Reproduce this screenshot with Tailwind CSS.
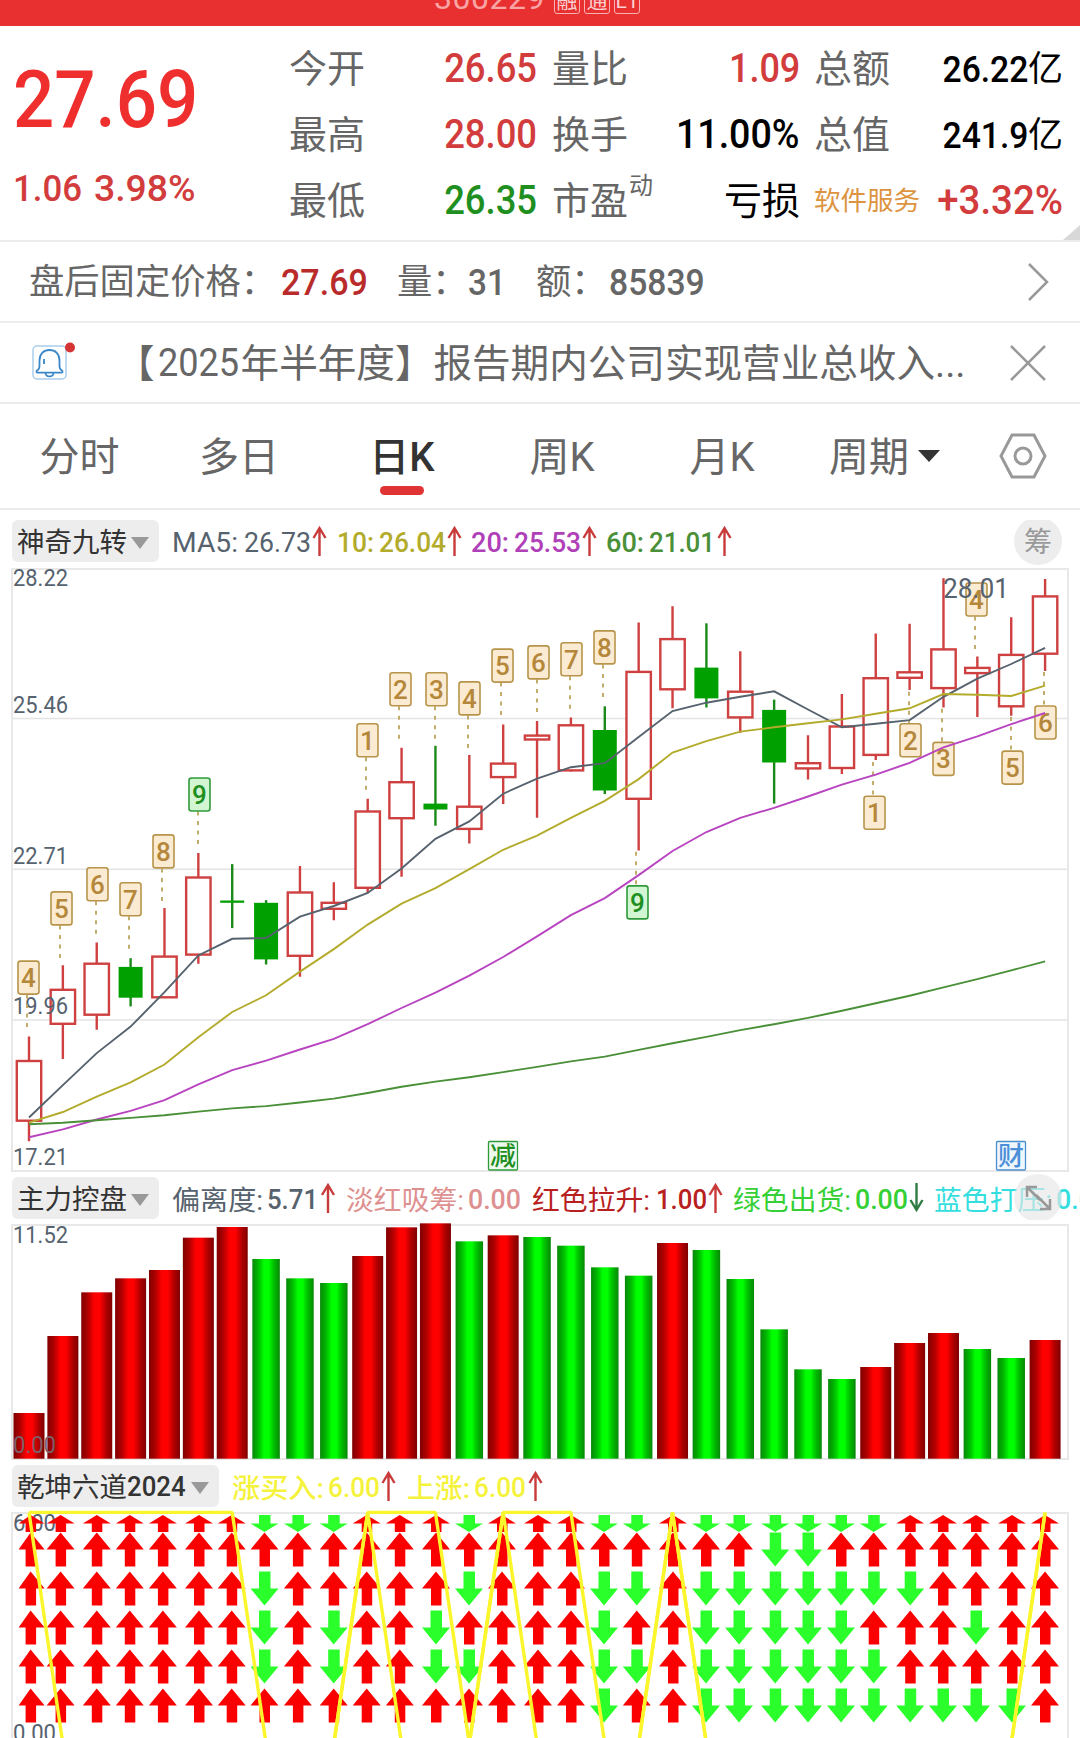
<!DOCTYPE html>
<html lang="zh-CN">
<head>
  <meta charset="UTF-8">
  <title>300229 日K</title>
  <script src="https://cdn.jsdelivr.net/npm/@tailwindcss/browser@4"></script>
</head>
<body class="bg-white w-[1080px] h-[1738px] overflow-hidden leading-none text-[#666] font-[Roboto,'Noto_Sans_CJK_SC',sans-serif]">

  <!-- title bar -->
  <header class="h-[26px] bg-[#e83030] overflow-hidden">
    <div class="flex pl-[434px] -mt-[19px] h-[32px] items-end">
      <span class="w-[120px] text-[32px] leading-[30px] text-[#f9a5a5] tracking-[0.5px]">300229</span>
      <div class="flex gap-[4px] text-[21px] text-[#fbd0d0] -mb-px">
        <span class="w-[26px] h-[26px] border border-[#f9b0b0] rounded-[3px] flex items-center justify-center">融</span>
        <span class="w-[26px] h-[26px] border border-[#f9b0b0] rounded-[3px] flex items-center justify-center">通</span>
        <span class="w-[26px] h-[26px] border border-[#f9b0b0] rounded-[3px] flex items-center justify-center">L1</span>
      </div>
    </div>
  </header>

  <!-- quote -->
  <section class="relative h-[216px] border-b-2 border-[#ececec] flex">
    <div class="w-[289px] pl-[13px] text-[#ef2e2e]">
      <div class="h-[80px] mt-[34px] flex items-center text-[79px] font-medium whitespace-nowrap"><span class="origin-left scale-x-[.92]">27.69</span></div>
      <div class="mt-[28px] h-[40px] flex items-center text-[37px] text-[#d23c3c]">
        <span class="w-[81px]"><span class="inline-block origin-left scale-x-[.94] font-medium">1.06</span></span>
        <span class="inline-block origin-left scale-x-[1.01] font-medium">3.98%</span>
      </div>
    </div>
    <div class="w-[248px] pt-[10px] text-[38px]">
      <div class="h-[66px] flex items-center justify-between"><span>今开</span><span class="origin-right scale-x-[.91] text-[40px] font-medium text-[#d23c3c]">26.65</span></div>
      <div class="h-[66px] flex items-center justify-between"><span>最高</span><span class="origin-right scale-x-[.91] text-[40px] font-medium text-[#d23c3c]">28.00</span></div>
      <div class="h-[66px] flex items-center justify-between"><span>最低</span><span class="origin-right scale-x-[.91] text-[40px] font-medium text-[#1f8f1f]">26.35</span></div>
    </div>
    <div class="w-[248px] ml-[15px] pt-[10px] text-[38px]">
      <div class="h-[66px] flex items-center justify-between"><span>量比</span><span class="origin-right scale-x-[.9] text-[40px] font-medium text-[#d23c3c]">1.09</span></div>
      <div class="h-[66px] flex items-center justify-between"><span>换手</span><span class="origin-right scale-x-[.94] text-[40px] font-medium text-black">11.00%</span></div>
      <div class="h-[66px] flex items-center justify-between"><span class="flex">市盈<span class="text-[24px] -mt-[8px] pl-px">动</span></span><span class="text-black">亏损</span></div>
    </div>
    <div class="w-[249px] ml-[14px] pt-[10px] text-[38px]">
      <div class="h-[66px] flex items-center justify-between"><span>总额</span><span class="flex items-center text-black"><span class="origin-right scale-x-[.91] text-[37px] font-medium">26.22</span><span class="text-[35px]">亿</span></span></div>
      <div class="h-[66px] flex items-center justify-between"><span>总值</span><span class="flex items-center text-black"><span class="origin-right scale-x-[.91] text-[37px] font-medium">241.9</span><span class="text-[35px]">亿</span></span></div>
      <div class="h-[66px] flex items-center justify-between"><span class="text-[26.5px] text-[#dd9440]">软件服务</span><span class="origin-right scale-x-[.96] text-[40px] font-medium text-[#d23c3c]">+3.32%</span></div>
    </div>
    <svg class="absolute right-0 bottom-0 w-[17px] h-[15px]" viewBox="0 0 17 15"><path d="M17 0V15H0z" fill="#d8d8d8"/></svg>
  </section>

  <!-- after-hours price -->
  <section class="h-[81px] border-b-2 border-[#ececec] flex items-center pl-[29px] pt-[2px] text-[35.3px] whitespace-nowrap">
    <span class="w-[252px]">盘后固定价格：</span>
    <span class="w-[116px]"><span class="inline-block origin-left scale-x-[.92] text-[37px] font-medium text-[#b92b2b]">27.69</span></span>
    <span class="w-[71px]">量：</span>
    <span class="w-[68px]"><span class="inline-block origin-left scale-x-[.9] text-[37px] font-medium">31</span></span>
    <span class="w-[73px]">额：</span>
    <span class="w-[417px]"><span class="inline-block origin-left scale-x-[.91] text-[37px] font-medium">85839</span></span>
    <svg class="w-[24px] h-[42px] -mt-[2px]" viewBox="0 0 24 42" fill="none" stroke="#999" stroke-width="2.5"><path d="M3 3L21 21L3 39"/></svg>
  </section>

  <!-- notice -->
  <section class="h-[81px] border-b-2 border-[#ececec] flex items-center pl-[30px] text-[38.6px] whitespace-nowrap">
    <svg class="w-[50px] h-[42px] mr-[36px]" viewBox="0 0 50 42" fill="none">
      <rect x="3" y="4" width="33" height="33" rx="4" stroke="#a9cdeb" stroke-width="1.5"/>
      <path d="M7 28.5c3-1.500 2.500-4 2.500-10C9.500 11.500 14 8 19.500 8S29.500 11.500 29.500 18.500c0 6-.5 8.500 2.500 10q1.500 2-1 2.200H8q-2.500-.2-1-2.200z" stroke="#3a87c8" stroke-width="1.800"/>
      <path d="M15.500 31c.5 4.500 7.500 4.500 8 0M14 17v5" stroke="#3a87c8" stroke-width="1.800"/>
      <circle cx="40" cy="5.500" r="5" fill="#d63434"/>
    </svg>
    <span class="pt-[3px]">【</span>
    <span class="w-[86px] pl-[3px] pt-[2px]"><span class="inline-block origin-left scale-x-[.95] text-[38px]">2025</span></span>
    <span class="w-[770px] pt-[3px]">年半年度】报告期内公司实现营业总收入...</span>
    <svg class="-ml-px w-[36px] h-[36px]" viewBox="0 0 36 36" fill="none" stroke="#999" stroke-width="2.500"><path d="M1 1L35 35M35 1L1 35"/></svg>
  </section>

  <!-- period tabs -->
  <nav class="h-[106px] border-b-2 border-[#ececec] flex items-center text-[40px] whitespace-nowrap">
    <span class="w-[159px] pt-[3px] text-center">分时</span>
    <span class="w-[160px] pt-[3px] text-center">多日</span>
    <span class="w-[166px] h-full pt-[3px] flex items-center justify-center relative text-[#333] font-medium">日K<i class="absolute left-[61px] bottom-[13px] w-[44px] h-[9px] rounded-full bg-[#e03434]"></i></span>
    <span class="w-[154px] pt-[3px] text-center">周K</span>
    <span class="w-[166px] pt-[3px] text-center">月K</span>
    <span class="w-[104px] pt-[3px] flex justify-end">周期</span>
    <svg class="ml-[9px] w-[22px] h-[12px]" viewBox="0 0 22 12"><path d="M0 0H22L11 12z" fill="#333"/></svg>
    <svg class="ml-[59px] w-[48px] h-[46px]" viewBox="0 0 48 46" fill="none" stroke="#999" stroke-width="3"><path d="M13 2H35L46 23L35 44H13L2 23z"/><circle cx="24" cy="23" r="8"/></svg>
  </nav>

  <!-- K line -->
  <section class="h-[662px]">
    <div class="h-[58px] pt-[10px] pl-[12px] flex">
      <div class="w-[147px] h-[42px] rounded-[6px] bg-[#ededed] flex items-center pl-[5px] gap-[4px] text-[27.5px] text-[#333]"><span class="pt-[3px]">神奇九转</span><svg class="mt-[3px] w-[18px] h-[12px]" viewBox="0 0 18 12"><path d="M0 0H18L9 12z" fill="#999"/></svg></div>
      <svg id="legendMa" class="w-[921px] h-[48px]" viewBox="159 520 921 48"></svg>
    </div>
    <svg id="kline" class="block w-[1080px] h-[604px]" viewBox="0 568 1080 604"></svg>
  </section>

  <!-- main force control -->
  <section class="h-[288px]">
    <div class="h-[48px] pt-[5px] pl-[12px] flex">
      <div class="w-[147px] h-[42px] rounded-[6px] bg-[#ededed] flex items-center pl-[5px] gap-[4px] text-[27.5px] text-[#333]"><span class="pt-[3px]">主力控盘</span><svg class="mt-[3px] w-[18px] h-[12px]" viewBox="0 0 18 12"><path d="M0 0H18L9 12z" fill="#999"/></svg></div>
      <svg id="legendBar" class="w-[921px] h-[48px] -mt-[5px]" viewBox="159 1172 921 48"></svg>
    </div>
    <svg id="bars" class="block w-[1080px] h-[240px]" viewBox="0 1220 1080 240"></svg>
  </section>

  <!-- six ways -->
  <section class="h-[278px]">
    <div class="h-[48px] pt-[5px] pl-[12px] flex">
      <div class="w-[207px] h-[42px] rounded-[6px] bg-[#ededed] flex items-center pl-[5px] text-[27.5px] text-[#333]"><span class="pt-[3px]">乾坤六道</span><span class="w-[64px] pt-[2px]"><span class="inline-block origin-left scale-x-[.92] text-[28px] font-medium">2024</span></span><svg class="mt-[3px] w-[18px] h-[12px]" viewBox="0 0 18 12"><path d="M0 0H18L9 12z" fill="#999"/></svg></div>
      <svg id="legendSix" class="w-[861px] h-[48px] -mt-[5px]" viewBox="219 1460 861 48"></svg>
    </div>
    <svg id="six" class="block w-[1080px] h-[230px]" viewBox="0 1508 1080 230"></svg>
  </section>

  <script>
    const STEP = 33.87;
    const colX = i => 29 + i * STEP;
    const put = (id, html) => { document.getElementById(id).innerHTML = html; };

    // text fitted between x and x + w, centred on cy
    function label(x, w, cy, size, color, str, extra = '') {
      return `<text x="${x}" y="${cy + size * 0.355}" font-size="${size}" fill="${color}" textLength="${w}" lengthAdjust="spacingAndGlyphs" ${extra}>${str}</text>`;
    }
    const bold = 'font-weight="500"';
    const up = (x, cy) => `<path d="M${x} ${cy + 15}V${cy - 13}M${x - 6} ${cy - 3}L${x} ${cy - 13}L${x + 6} ${cy - 3}" fill="none" stroke="#c93a3a" stroke-width="2.4"/>`;
    const down = (x, cy) => `<path d="M${x} ${cy - 15}V${cy + 12}M${x - 6} ${cy + 2}L${x} ${cy + 12}L${x + 6} ${cy + 2}" fill="none" stroke="#2f7d45" stroke-width="2.4"/>`;

    // legends
    put('legendMa',
      label(172, 66, 542, 28, '#56626e', 'MA5:') + label(244, 67, 542, 28, '#56626e', '26.73') + up(319.500, 541) +
      label(337, 37, 542, 28, '#b3ab2c', '10:', bold) + label(379, 67, 542, 28, '#b3ab2c', '26.04', bold) + up(454.500, 541) +
      label(471, 38, 542, 28, '#b040b8', '20:', bold) + label(514, 67, 542, 28, '#b040b8', '25.53', bold) + up(589.500, 541) +
      label(606, 38, 542, 28, '#4a9038', '60:', bold) + label(649, 66, 542, 28, '#4a9038', '21.01', bold) + up(724.500, 541) +
      `<circle cx="1038" cy="541" r="24" fill="#ededed"/>` + label(1024, 28, 542, 28, '#999', '筹')
    );
    put('legendBar',
      label(172, 91, 1200, 27.500, '#56626e', '偏离度:') + label(267, 51, 1199, 28, '#56626e', '5.71', bold) + up(328, 1198) +
      label(346, 118, 1200, 27.500, '#de9090', '淡红吸筹:') + label(468, 53, 1199, 28, '#de9090', '0.00', bold) +
      label(532, 118, 1200, 27.500, '#b82020', '红色拉升:') + label(656, 51, 1199, 28, '#b82020', '1.00', bold) + up(715.500, 1198) +
      label(733, 118, 1200, 27.500, '#35d035', '绿色出货:') + label(855, 53, 1199, 28, '#35d035', '0.00', bold) + down(916.500, 1198) +
      label(934, 118, 1200, 27.500, '#35dede', '蓝色打压:') + label(1056, 53, 1199, 28, '#35dede', '0.00', bold) +
      `<circle cx="1038" cy="1198" r="24" fill="#e6e6e6" fill-opacity=".65"/>
       <path d="M1027 1197V1187H1037M1028 1188L1040 1200M1050 1199V1209H1040M1049 1208L1036 1195" fill="none" stroke="#999" stroke-width="2.5"/>`
    );
    put('legendSix',
      label(232, 92, 1488, 27.500, '#f5f23c', '涨买入:', bold) + label(328, 52, 1487, 28, '#f5f23c', '6.00', bold) + up(388.500, 1486) +
      label(407, 63, 1488, 27.500, '#f5f23c', '上涨:', bold) + label(474, 52, 1487, 28, '#f5f23c', '6.00', bold) + up(535.500, 1486)
    );

    // high, body top, body bottom, low, 1 = rise
    const candles = [
      [1205,1267,1418,1470,1],[1025,1087,1173,1262,1],[967,1021,1150,1188,1],[1007,1029,1107,1129,0],
      [880,1003,1106,1106,1],[741,803,998,1021,1],[769,861,867,931,0],[860,867,1010,1023,0],
      [774,841,1001,1054,1],[815,867,882,911,1],[604,636,829,843,1],[475,562,653,801,1],
      [470,616,631,672,0],[493,624,680,717,1],[416,515,549,617,1],[407,444,454,652,1],
      [398,418,532,535,1],[370,430,583,592,0],[158,283,604,735,1],[117,200,327,375,1],
      [160,272,350,373,0],[231,333,398,437,1],[353,379,512,616,0],[443,514,527,555,1],
      [339,421,526,541,1],[186,299,493,506,1],[161,284,298,329,1],[46,226,324,373,1],
      [244,273,286,397,1],[145,240,370,394,1],[48,92,237,281,1]
    ];
    const lines = {
      '#56626e': [1410,1328,1247,1180,1093,1000,958,956,902,875,842,780,705,661,591,553,524,514,448,382,361,346,332,378,423,414,405,346,300,263,222],
      '#b3ab2c': [1423,1396,1357,1321,1276,1207,1143,1101,1041,984,922,869,830,782,733,697,652,609,554,487,458,434,423,413,403,389,375,339,341,344,318],
      '#b844c0': [1460,1440,1415,1393,1366,1326,1290,1266,1238,1211,1174,1133,1094,1051,1004,952,898,855,797,736,688,652,627,598,568,543,513,474,446,415,387],
      '#4a9038': [1427,1423,1417,1411,1404,1395,1387,1381,1372,1362,1348,1332,1319,1308,1295,1282,1268,1256,1239,1222,1206,1189,1174,1158,1140,1121,1102,1081,1060,1038,1015]
    };
    // centre x, top, digit, start of the dashes when the tag is under the candle
    const tags = [
      [28.500,1013,4],[61.500,838,5],[97.500,777,6],[130.500,815,7],[163.500,694,8],[199.500,550,9],[367.500,413,1],
      [400.500,284,2],[436.500,284,3],[469.500,307,4],[502.500,224,5],[538.500,216,6],[571.500,208,7],[604.500,178,8],
      [637.500,823,9,738],[874.500,596,1,511],[910.500,413,2,333],[943.500,460,3,376],[976.500,57,4],[1012.500,482,5,397],[1045.500,368,6,283]
    ];
    const py = v => +(560 + v / 2.529).toFixed(1);

    let k = `<g stroke="#e4e4e4" stroke-width="1.5"><path d="M12 718.600H1068M12 869.200H1068M12 1020H1068"/><rect x="12" y="569" width="1056" height="602" fill="none" stroke="#e8e8e8" stroke-width="2"/></g>`;
    candles.forEach(([h, t, b, l, rise], i) => {
      const x = colX(i), c = rise ? '#cf4040' : '#1b8a1b';
      if (rise) {
        k += `<path d="M${x} ${py(h)}V${py(t)}M${x} ${py(b)}V${py(l)}" stroke="${c}" stroke-width="2.4"/>`;
        k += `<rect x="${x - 12.2}" y="${py(t)}" width="24.4" height="${py(b) - py(t)}" fill="#fff" stroke="${c}" stroke-width="2.4"/>`;
      } else {
        k += `<path d="M${x} ${py(h)}V${py(l)}" stroke="${c}" stroke-width="2.4"/>`;
        k += `<rect x="${x - 12}" y="${py(t)}" width="24" height="${py(b) - py(t)}" fill="#00a000"/>`;
      }
    });
    [['28.22', 577.8], ['25.46', 704.7], ['22.71', 855.8], ['19.96', 1006], ['17.21', 1157]].forEach(([s, y]) => {
      k += label(13, 55, y, 23.5, '#56626e', s);
    });
    tags.forEach(([cx, top, n, from]) => {
      const y = py(top), g = n === 9;
      const d1 = from ? py(from) : y + 34, d2 = from ? y : y + 68;
      k += `<path d="M${cx - 1.5} ${d1}V${d2}" stroke="#bda55e" stroke-width="1.8" stroke-dasharray="4 5.5"/>`;
      k += `<rect x="${cx - 10.5}" y="${y + 0.5}" width="21" height="33" rx="2.5" fill="${g ? '#d2f5d2' : '#faebd2'}" stroke="${g ? '#2f9a3a' : '#b8944a'}" stroke-width="1.6"/>`;
      k += `<text x="${cx}" y="${y + 26.5}" font-size="26" text-anchor="middle" font-weight="500" fill="${g ? '#1f8f1f' : '#b5873a'}">${n}</text>`;
    });
    for (const c in lines) {
      k += `<polyline fill="none" stroke="${c}" stroke-width="1.9" points="${lines[c].map((v, i) => colX(i) + ',' + py(v)).join(' ')}"/>`;
    }
    k += label(943, 66, 588.5, 27, '#56626e', '28.01');
    k += `<rect x="488.500" y="1141.500" width="29" height="28.500" rx="1" fill="#effaef" stroke="#2f9a3a" stroke-width="1.3"/>` + label(490, 26, 1156, 26, '#1f8f1f', '减', bold);
    k += `<rect x="996.500" y="1141.500" width="29" height="28.500" rx="1" fill="#eff6fc" stroke="#4a8fcf" stroke-width="1.3"/>` + label(998, 26, 1156, 26, '#4a8fd8', '财', bold);
    put('kline', k);

    // column tops, negative = green
    const cols = [729,498,367,325,300,203,171,-267,-325,-339,258,172,160,-214,196,-201,-227,-292,-317,219,-240,-327,-478,-598,-627,591,519,489,-537,-564,510];
    const grad = (id, a, b, c, d) => `<linearGradient id="${id}"><stop offset="0" stop-color="${a}"/><stop offset=".2" stop-color="${b}"/><stop offset=".32" stop-color="${c}"/><stop offset=".42" stop-color="${d}"/><stop offset=".6" stop-color="${d}"/><stop offset=".7" stop-color="${c}"/><stop offset=".82" stop-color="${b}"/><stop offset="1" stop-color="${a}"/></linearGradient>`;
    let b = `<defs>${grad('red', '#800000', '#ac0000', '#d80000', '#ff0000')}${grad('green', '#088808', '#00b400', '#00d800', '#00ff00')}</defs>`;
    b += `<rect x="12" y="1225" width="1056" height="234" fill="none" stroke="#e8e8e8" stroke-width="2"/>`;
    cols.forEach((v, i) => {
      const w = v > 0 ? 31 : 27.5, y = 1170 + Math.abs(v) / 3;
      b += `<rect x="${colX(i) - w / 2}" y="${y}" width="${w}" height="${1458.7 - y}" fill="url(#${v > 0 ? 'red' : 'green'})"/>`;
    });
    b += label(13, 55, 1234.5, 24, '#56626e', '11.52') + label(13, 43, 1444.5, 24, '#7d5f68', '0.00');
    put('bars', b);

    const arrowX = [30.6,60.6,96.8,129.8,162.9,199,231.7,264.5,297.9,333.7,366.7,399.8,436,469,502,538,571,604,636.8,673,706,739,775.2,808,841,873.7,910.2,943,976,1012,1045];
    const ways = [
      'uuuuuu','uuuuuu','uuuuuu','uuuuuu','uuuuuu','uuuuuu','uuuuuu','dudddu','duuuuu','duuddu','uuuuuu','uuuuuu','uuuddu','dududu','uuuuuu','uuuuuu',
      'uuuuuu','dudddd','dududu','uuuuuu','dudddd','dudddd','dddddd','dddddd','dudddd','dududd','uuduud','uuuuud','uuudud','uuuuud','uuuuuu'
    ];
    let s = `<path d="M12 1738V1513H1068V1738" fill="none" stroke="#e8e8e8" stroke-width="2"/>`;
    s += label(13, 43, 1522.5, 24, '#56626e', '6.00') + label(13, 43, 1732.5, 24, '#56626e', '0.00');
    ways.forEach((way, i) => {
      [...way].forEach((w, r) => {
        const x = arrowX[i], top = r ? 1532.5 + (r - 1) * 39 : 1515, h = r ? 34 : 17, m = r ? 17 : 8.5;
        const l = i ? 14 : 12;
        s += w === 'u'
          ? `<path d="M${x} ${top}L${x + 14} ${top + m}H${x + 5.5}V${top + h}H${x - 5}V${top + m}H${x - l}z" fill="#fb0000"/>`
          : `<path d="M${x} ${top + h}L${x + 14} ${top + h - m}H${x + 6}V${top}H${x - 5.5}V${top + h - m}H${x - 14}z" fill="#2bff2b"/>`;
      });
    });
    const rise = [6,6,6,6,6,6,6,0,0,0,6,6,6,0,6,6,6,0,0,6,0,0,0,0,0,0,0,0,0,0,6];
    const buy = [6,0,0,0,0,0,0,0,0,0,6,0,0,0,6,0,0,0,0,6,0,0,0,0,0,0,0,0,0,0,6];
    [rise, buy].forEach(a => {
      s += `<polyline fill="none" stroke="#fbf62c" stroke-width="3.4" stroke-linejoin="bevel" points="${a.map((v, i) => colX(i) + ',' + (1744 - v * 38.6)).join(' ')}"/>`;
    });
    put('six', s);
  </script>

</body>
</html>
